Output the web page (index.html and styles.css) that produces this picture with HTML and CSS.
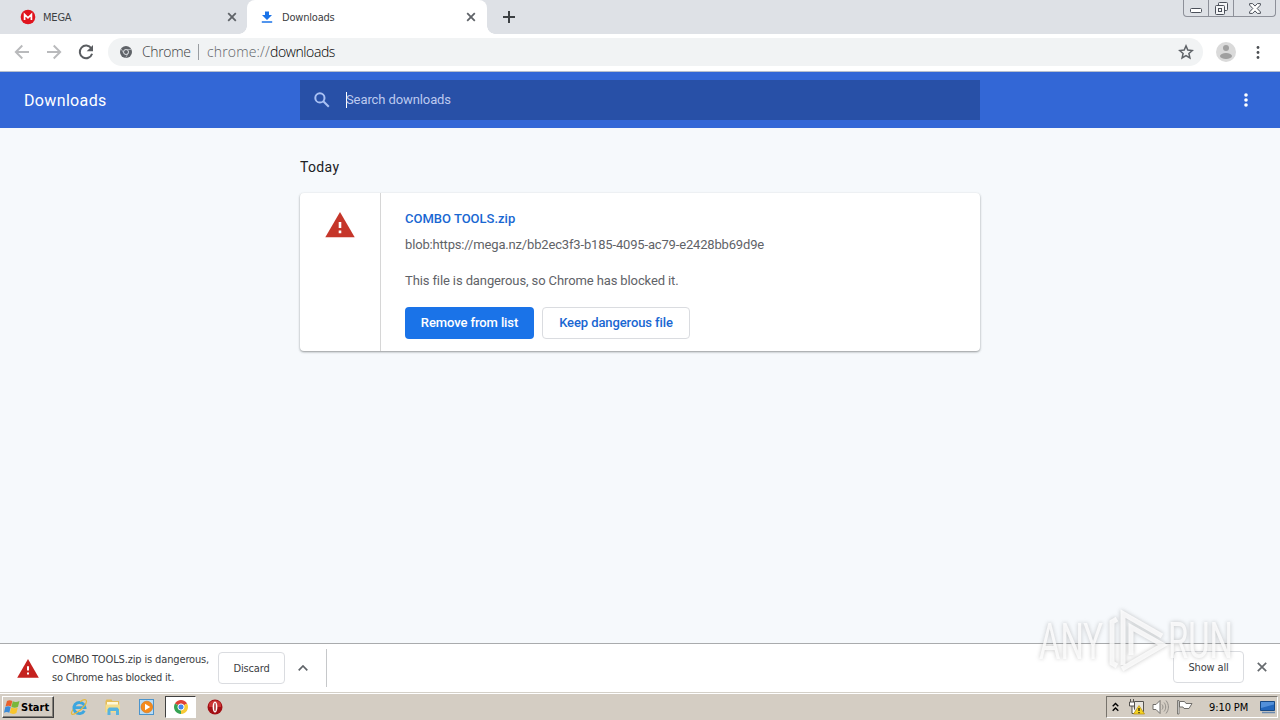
FILE: index.html
```html
<!DOCTYPE html>
<html lang="en">
<head>
    <meta charset="UTF-8">
    <meta name="viewport" content="width=device-width, initial-scale=1.0">
    <title>Downloads</title>
    <link rel="stylesheet" href="styles.css">
</head>
<body>
    <div class="tab-strip">
        <div class="tab">
            <svg class="favicon" width="16" height="16" viewBox="0 0 16 16"><circle cx="8" cy="8" r="7.3" fill="#e0141e"/><path d="M4.6 11V5.5L8 8.8l3.4-3.3V11" fill="none" stroke="#fff" stroke-width="1.7"/></svg>
            <span class="tab-title">MEGA</span>
            <svg class="tab-close" width="10" height="10" viewBox="0 0 10 10"><path d="M1.2 1.2l7.6 7.6M8.8 1.2L1.2 8.8"/></svg>
        </div>
        <div class="tab active">
            <svg class="favicon" width="16" height="16" viewBox="0 0 16 16"><path d="M6 2.5h4V6h3l-5 5-5-5h3zM2.8 12.3h10.4v1.5H2.8z" fill="#1a73e8"/></svg>
            <span class="tab-title">Downloads</span>
            <svg class="tab-close" width="10" height="10" viewBox="0 0 10 10"><path d="M1.2 1.2l7.6 7.6M8.8 1.2L1.2 8.8"/></svg>
        </div>
        <svg class="new-tab" width="12" height="12" viewBox="0 0 12 12"><path d="M6 0v12M0 6h12" stroke="#3c4043" stroke-width="2"/></svg>
        <div class="window-buttons">
            <span class="win-btn"><svg width="12" height="5"><rect x=".5" y=".5" width="11" height="4" rx="1" fill="#fff" stroke="#4b505a"/></svg></span>
            <span class="win-btn"><svg width="13" height="13" fill="#f4f5f7" stroke="#4b505a"><rect x="3.5" y=".5" width="9" height="8" rx="1"/><rect x=".5" y="3.5" width="9" height="9" rx="1"/><rect x="3.5" y="6.5" width="3" height="3"/></svg></span>
            <span class="win-btn close"><svg width="12" height="11" viewBox="0 0 12 11"><path d="M.6.6h3L6 3.1 8.4.6h3v1.5L8.2 5.5l3.2 3.4v1.5h-3L6 7.9l-2.4 2.5h-3V8.9L3.8 5.5.6 2.1z" fill="#fff" stroke="#4b505a"/></svg></span>
        </div>
    </div>

    <div class="toolbar">
        <svg class="nav-icon" width="16" height="16" viewBox="0 0 16 16"><path d="M15 8H2M8.3 1.5L1.8 8l6.5 6.5" fill="none" stroke="#b9babc" stroke-width="1.9"/></svg>
        <svg class="nav-icon" width="16" height="16" viewBox="0 0 16 16"><path d="M1 8h13M7.7 1.5L14.2 8l-6.5 6.5" fill="none" stroke="#b9babc" stroke-width="1.9"/></svg>
        <svg class="nav-icon" width="16" height="16" viewBox="0 0 16 16"><path d="M13.3 4.3A6.3 6.3 0 1 0 14.1 9.8" fill="none" stroke="#5a5d61" stroke-width="2"/><path d="M15 1v6.3H8.7z" fill="#5a5d61"/></svg>
        <div class="omnibox">
            <svg width="12" height="12" viewBox="0 0 12 12"><circle cx="6" cy="6" r="6" fill="#5f6368"/><circle cx="6" cy="6" r="2.5" fill="none" stroke="#eef1f4" stroke-width=".9"/><path d="M6 3.5h5.3M3.8 7.2L1.2 3M8.2 7.2L5.7 11.7" stroke="#c8cbd0" stroke-width=".7"/></svg>
            <span class="origin">Chrome</span>
            <span class="divider"></span>
            <span class="scheme">chrome://</span><span class="host">downloads</span>
            <svg class="star" width="16" height="16" viewBox="0 0 16 16"><path d="M8 1.9l1.8 4.2 4.5.4-3.4 3 1 4.4L8 11.6l-3.9 2.3 1-4.4-3.4-3 4.500-.4z" fill="none" stroke="#5f6368" stroke-width="1.5"/></svg>
        </div>
        <svg class="avatar" width="20" height="20" viewBox="0 0 20 20"><circle cx="10" cy="10" r="10" fill="#dadada"/><circle cx="10" cy="6" r="3" fill="#a0a0a0"/><ellipse cx="10" cy="14" rx="6" ry="3" fill="#a0a0a0"/></svg>
        <svg class="browser-menu" width="4" height="14" viewBox="0 0 4 14" fill="#4c4f53"><circle cx="2" cy="2.5" r="1.4"/><circle cx="2" cy="7.5" r="1.4"/><circle cx="2" cy="12.5" r="1.4"/></svg>
    </div>

    <header class="page-header">
        <h1>Downloads</h1>
        <div class="search">
            <svg width="16" height="16" viewBox="0 0 16 16" fill="none" stroke="#a9c1f4" stroke-width="2"><circle cx="5.9" cy="5.9" r="4.6"/><path d="M9.3 9.3l5.5 5.5"/></svg>
            <span class="caret"></span>
            <span class="placeholder">Search downloads</span>
        </div>
        <svg class="page-menu" width="4" height="14" viewBox="0 0 4 14" fill="#fff"><circle cx="2" cy="2" r="1.8"/><circle cx="2" cy="7" r="1.8"/><circle cx="2" cy="12" r="1.8"/></svg>
    </header>

    <main class="content">
        <h2>Today</h2>
        <div class="card">
            <div class="card-icon">
                <svg width="30" height="26" viewBox="0 0 30 26"><path d="M15 0l14.7 25.3H.3z" fill="#c5362a"/><path d="M13.7 10h2.6v6h-2.6zM13.7 18.5h2.6v2.7h-2.6z" fill="#fff"/></svg>
            </div>
            <div class="card-body">
                <div class="file-name">COMBO TOOLS.zip</div>
                <div class="file-url">blob:https://mega.nz/bb2ec3f3-b185-4095-ac79-e2428bb69d9e</div>
                <div class="file-warning">This file is dangerous, so Chrome has blocked it.</div>
                <div class="actions">
                    <button class="btn-remove">Remove from list</button>
                    <button class="btn-keep">Keep dangerous file</button>
                </div>
            </div>
        </div>
    </main>

    <div class="shelf">
        <svg class="shelf-warning" width="22" height="19" viewBox="0 0 22 19"><path d="M11 0l10.8 18.7H.2z" fill="#c5221f"/><path d="M10 7.3h2v4.3h-2zM10 13.5h2v2h-2z" fill="#fff"/></svg>
        <div class="shelf-text"><span class="line-one">COMBO TOOLS.zip is dangerous,</span><span class="line-two">so Chrome has blocked it.</span></div>
        <button class="shelf-btn discard">Discard</button>
        <svg class="chevron" width="10" height="6" viewBox="0 0 10 6"><path d="M.7 5.3L5 1l4.3 4.3" fill="none" stroke="#5f6368" stroke-width="1.7"/></svg>
        <span class="shelf-divider"></span>
        <button class="shelf-btn show-all">Show all</button>
        <svg class="shelf-close" width="10" height="10" viewBox="0 0 10 10"><path d="M.8.8l8.4 8.4M9.2.8L.8 9.2" stroke="#666a6e" stroke-width="1.7"/></svg>
    </div>

    <div class="taskbar">
        <div class="start">
            <svg width="16" height="16" viewBox="0 0 16 16"><path d="M3 2C5 .7 6.7 1 8.3 2L7 7.5C5.3 6.5 3.5 6.5 1.5 7.5z" fill="#e8602c"/><path d="M8.8 2.3c2 1 4 1 6.7-.4L14 7.7c-2 1.2-4.3 1.2-6.6.2z" fill="#79b73a"/><path d="M1.3 8.1c2-1 3.7-1 5.4 0l-1.4 5.6c-1.7-1-3.5-1-5.3 0z" fill="#3b8bd8"/><path d="M7.2 8.5c2 1 4.2 1 6.6-.1l-1.4 5.6c-2.2 1.2-4.5 1.2-6.6.1z" fill="#f8c52c"/></svg>
            <span>Start</span>
        </div>
        <div class="task">
            <svg width="18" height="18" viewBox="0 0 18 18"><path d="M14.3 12.8A5.6 5.6 0 1 1 15 9.6H5" fill="none" stroke="#3ca6df" stroke-width="2.9"/><path d="M3 11.5C-.5 17 2.5 17.5 7 14.5 12.5 11 18 4.3 16 2.2c-1.3-1.3-4.5.5-6 1.5" fill="none" stroke="#e5b93d" stroke-width="1.2"/></svg>
        </div>
        <div class="task">
            <svg width="18" height="18" viewBox="0 0 18 18"><path d="M1.5 3l1-1.5h5L8.5 3H15v11H1.5z" fill="#e5bd57"/><path d="M3 4h11v4H3z" fill="#fff8d9"/><path d="M1.5 6.5H16v8H1.5z" fill="#f4dd8c"/><path d="M3.5 17v-5.5L5 9.5h8.5l1.5 2V17h-3v-4H6.5v4z" fill="#57b3df"/></svg>
        </div>
        <div class="task">
            <svg width="18" height="18" viewBox="0 0 18 18"><rect x="1.5" y="1.5" width="14" height="15" fill="#b9dcf5" stroke="#4b94cc"/><circle cx="8.8" cy="9" r="5.8" fill="#f58a1c" stroke="#d36e0c" stroke-width=".6"/><path d="M7 5.7l5.2 3.3L7 12.3z" fill="#fff"/></svg>
        </div>
        <div class="task current">
            <svg width="14" height="14" viewBox="0 0 14 14"><path d="M7 7L.94 3.5A7 7 0 0 1 13.06 3.5z" fill="#df4136"/><path d="M7 7l6.06-3.5A7 7 0 0 1 7 14z" fill="#f8ca35"/><path d="M7 7v7A7 7 0 0 1 .94 3.5z" fill="#36a353"/><circle cx="7" cy="7" r="3.1" fill="#4386ee" stroke="#fff"/></svg>
        </div>
        <div class="task opera">
            <svg width="16" height="16" viewBox="0 0 16 16"><circle cx="8" cy="8" r="7.5" fill="#a30f14"/><path d="M2 5a7 7 0 0 1 12 0v3H2z" fill="#cc3434"/><ellipse cx="8" cy="8" rx="2.4" ry="5.5" fill="#fff"/><ellipse cx="8" cy="8" rx=".9" ry="4.3" fill="#b24141"/></svg>
        </div>
        <div class="tray">
            <svg width="7" height="10" viewBox="0 0 7 10" fill="none" stroke="#000" stroke-width="1.4"><path d="M.7 4.2l2.8-2.8 2.8 2.8M.7 8.7l2.8-2.8 2.8 2.8"/></svg>
            <svg class="tray-net" width="18" height="16" viewBox="0 0 18 16"><path d="M6.5 2.5h9v10h-9z" fill="#e8e5df" stroke="#55534f"/><path d="M1.5 3h5v4h-5zM2.5 0v3M5.5 0v3M4 7v7.5h5" fill="#fff" stroke="#55534f"/><path d="M11 6.5l5.5 8.5h-11z" fill="#f4d322" stroke="#b58b0d" stroke-width=".7"/><path d="M11 9v3M11 13v1.2" stroke="#111" stroke-width="1.2"/></svg>
            <svg class="tray-sound" width="17" height="16" viewBox="0 0 17 16"><path d="M1 5.5h3l4-4v13l-4-4H1z" fill="#fff" stroke="#706e6a"/><path d="M10 5.5c1.3 1.5 1.3 3.5 0 5M12 3.5c2.3 2.5 2.3 6.5 0 9M14 1.5c3.2 4 3.2 9 0 13" fill="none" stroke="#918e89"/></svg>
            <svg class="tray-flag" width="17" height="16" viewBox="0 0 17 16"><path d="M1.5 1.5H3V15H1.5z" fill="#fff" stroke="#706e6a" stroke-width=".9"/><path d="M3.500 2.500h5l1.500 2h6l-3 5H8l-1-1.500H3.500z" fill="#fff" stroke="#706e6a"/></svg>
            <span class="clock">9:10 PM</span>
            <svg class="desktop" width="16" height="14" viewBox="0 0 16 14"><path d="M.5 1.5h14v9H.5z" fill="#2367bc" stroke="#174984"/><path d="M1 2h13v2.5L1 8z" fill="#5290d9"/><path d="M2 12.5h13" stroke="#6a89ae" stroke-width="1.5"/></svg>
        </div>
    </div>

    <svg class="watermark" width="210" height="76" viewBox="0 0 210 76">
        <g class="watermark-text">
            <text x="9" y="50" textLength="64" lengthAdjust="spacingAndGlyphs">ANY</text>
            <text x="138" y="49" textLength="65" lengthAdjust="spacingAndGlyphs">RUN</text>
        </g>
        <g class="watermark-logo">
            <path d="M87 10l-5 3v41l5 3"/>
            <path d="M93 56V4.500L132 27"/>
            <path d="M101 46V18l32 18L92 60"/>
        </g>
    </svg>
</body>
</html>
```
FILE: styles.css
```css
* {
    box-sizing: border-box;
}
body {
    margin: 0;
    height: 720px;
    display: flex;
    flex-direction: column;
    overflow: hidden;
    position: relative;
    background: #f6f9fc;
    font-family: Roboto, sans-serif;
    color: #202124;
}
svg {
    display: block;
    flex: none;
}
span, h1, h2, .card-body {
    white-space: nowrap;
}
button {
    font-family: inherit;
    padding: 0;
}

/* tabs */
.tab-strip {
    height: 34px;
    flex: none;
    display: flex;
    align-items: center;
    background: #dee1e6;
    font: 11px "DejaVu Sans Condensed", "DejaVu Sans", sans-serif;
}
.tab {
    width: 247px;
    height: 34px;
    display: flex;
    align-items: center;
    padding: 0 10px 0 20px;
}
.tab.active {
    width: 240px;
    padding: 0 11px 0 12px;
    background: #fff;
    border-radius: 8px 8px 0 0;
    position: relative;
}
.tab.active::before, .tab.active::after {
    content: "";
    position: absolute;
    bottom: 0;
    width: 8px;
    height: 8px;
}
.tab.active::before {
    left: -8px;
    background: radial-gradient(circle at 0 0, #dee1e6 7.5px, #fff 8px);
}
.tab.active::after {
    right: -8px;
    background: radial-gradient(circle at 100% 0, #dee1e6 7.5px, #fff 8px);
}
.tab-title {
    margin-left: 7px;
    color: #3c4043;
    letter-spacing: -0.2px;
}
.tab-close {
    margin-left: auto;
}
.tab-close path {
    stroke: #5f6368;
    stroke-width: 1.8;
}
.new-tab {
    margin-left: 16px;
}
.window-buttons {
    display: flex;
    align-self: flex-start;
    margin: 0 4px 0 auto;
    height: 17px;
    border: 1px solid #8d9099;
    border-top: 0;
    border-radius: 0 0 4px 4px;
}
.win-btn {
    width: 25px;
    display: flex;
    align-items: center;
    justify-content: center;
    border-right: 1px solid #8d9099;
}
.win-btn:first-child {
    padding-top: 5px;
}
.win-btn.close {
    width: 41px;
    border-right: 0;
}

/* toolbar */
.toolbar {
    height: 38px;
    flex: none;
    display: flex;
    align-items: center;
    padding: 0 20px 2px 14px;
    background: #fff;
    border-bottom: 1px solid #b8c0cd;
}
.nav-icon {
    margin-right: 16px;
}
.omnibox {
    width: 1095px;
    height: 28px;
    margin-left: -2px;
    padding: 0 9px 0 12px;
    display: flex;
    align-items: center;
    border-radius: 14px;
    background: #f1f3f4;
    font: 300 14px "Open Sans", "DejaVu Sans Condensed", sans-serif;
}
.origin {
    width: 48px;
    margin-left: 10px;
    color: #3c4043;
    letter-spacing: -0.35px;
}
.divider {
    width: 1px;
    height: 16px;
    margin: 0 8px;
    background: #9a9da1;
}
.scheme {
    width: 63px;
    color: #5f6368;
    letter-spacing: 0.15px;
}
.host {
    color: #000;
    letter-spacing: -0.4px;
}
.star {
    margin-left: auto;
}
.avatar {
    margin-left: 13px;
}
.browser-menu {
    margin-left: auto;
}

/* downloads page */
.page-header {
    height: 56px;
    flex: none;
    display: grid;
    grid-template-columns: 276px 680px 1fr;
    align-items: center;
    padding: 0 32px 0 24px;
    background: #3367d6;
    color: #fff;
}
h1 {
    margin: 0;
    font-size: 16px;
    font-weight: 400;
    letter-spacing: 0.35px;
}
.search {
    height: 40px;
    display: flex;
    align-items: center;
    padding-left: 14px;
    background: #2850a7;
}
.caret {
    width: 1px;
    height: 16px;
    margin-left: 16px;
    background: #fff;
}
.placeholder {
    margin: -2px 0 0 -1px;
    font-size: 13px;
    color: #bdcaef;
    letter-spacing: -0.1px;
}
.page-menu {
    justify-self: end;
}
.content {
    flex: 1;
    width: 680px;
    margin: 0 auto;
}
h2 {
    margin: 30px 0 17px;
    font-size: 14px;
    line-height: 18px;
    font-weight: 400;
    letter-spacing: 0.35px;
}
.card {
    height: 158px;
    display: flex;
    background: #fff;
    border-radius: 4px;
    box-shadow: 0 1px 2px rgba(60, 64, 67, 0.4), 0 1px 3px rgba(60, 64, 67, 0.18);
}
.card-icon {
    width: 81px;
    padding: 19px 0 0 25px;
    border-right: 1px solid #d6d6d6;
}
.card-body {
    padding: 16px 24px;
    font-size: 13px;
    line-height: 20px;
    color: #5f6368;
}
.file-name {
    color: #1967d2;
    font-weight: 500;
}
.file-url {
    margin-top: 6px;
    letter-spacing: -0.165px;
}
.file-warning {
    margin-top: 16px;
    letter-spacing: -0.11px;
}
.actions {
    display: flex;
    gap: 8px;
    margin-top: 16px;
}
.actions button {
    height: 32px;
    padding-bottom: 2px;
    border-radius: 4px;
    font-size: 13px;
    font-weight: 500;
    letter-spacing: -0.1px;
}
.btn-remove {
    width: 129px;
    border: 0;
    background: #1a73e8;
    color: #fff;
}
.btn-keep {
    width: 148px;
    border: 1px solid #dadce0;
    background: #fff;
    color: #1967d2;
}

/* download shelf */
.shelf {
    height: 49px;
    flex: none;
    display: flex;
    align-items: center;
    padding: 0 13px 0 17px;
    background: #fff;
    border-top: 1px solid #a9abad;
    font: 11px "DejaVu Sans Condensed", "DejaVu Sans", sans-serif;
}
.shelf-text {
    width: 166px;
    margin: 1px 0 0 13px;
    display: flex;
    flex-direction: column;
    line-height: 18px;
    color: #3c4043;
}
.line-one {
    letter-spacing: -0.14px;
}
.line-two {
    letter-spacing: -0.24px;
}
.shelf-btn {
    height: 32px;
    border: 1px solid #dadce0;
    border-radius: 4px;
    background: #fff;
    font: inherit;
    color: #3c4043;
    letter-spacing: -0.15px;
}
.discard {
    width: 67px;
}
.chevron {
    margin-left: 13px;
}
.shelf-divider {
    width: 1px;
    height: 38px;
    margin-left: 18px;
    background: #c6c8ca;
}
.show-all {
    width: 71px;
    margin-left: auto;
    margin-top: -2px;
}
.shelf-close {
    margin-left: 13px;
    margin-top: -2px;
}

/* taskbar */
.taskbar {
    height: 28px;
    flex: none;
    display: flex;
    align-items: center;
    padding: 1px 2px 0;
    background: #d4cdc3;
    border-top: 1px solid #d4d0c8;
    box-shadow: inset 0 1px #fff;
    font: 11px "DejaVu Sans Condensed", "DejaVu Sans", sans-serif;
    color: #000;
}
.start {
    width: 52px;
    height: 22px;
    display: flex;
    align-items: center;
    gap: 1px;
    padding-left: 1px;
    border: 1px solid #404040;
    border-top-color: #fff;
    border-left-color: #fff;
    box-shadow: inset -1px -1px #85817a;
    font-weight: bold;
}
.task {
    margin-left: 16px;
}
.task.current {
    width: 31px;
    height: 22px;
    margin-left: 9px;
    display: flex;
    align-items: center;
    justify-content: center;
    background: #fff;
    border: 1px solid #fff;
    border-top-color: #404040;
    border-left-color: #404040;
}
.task.opera {
    margin-left: 11px;
}
.tray {
    width: 172px;
    height: 22px;
    margin-left: auto;
    display: flex;
    align-items: center;
    padding-left: 5px;
    border: 1px solid #fff;
    border-top-color: #77736c;
    border-left-color: #77736c;
}
.tray-net {
    margin-left: 9px;
}
.tray-sound {
    margin-left: 6px;
}
.tray-flag {
    margin-left: 7px;
}
.clock {
    margin-left: 16px;
    letter-spacing: -0.1px;
}
.desktop {
    margin: 0 1px 0 auto;
}

.watermark {
    position: absolute;
    left: 1030px;
    top: 609px;
    pointer-events: none;
    filter: drop-shadow(0 0 2px rgba(80, 80, 80, 0.4));
}
.watermark-text {
    font: 50px Roboto, sans-serif;
    fill: rgba(255, 255, 255, 0.8);
}
.watermark-logo {
    fill: none;
    stroke: rgba(255, 255, 255, 0.8);
    stroke-width: 5;
}
```
